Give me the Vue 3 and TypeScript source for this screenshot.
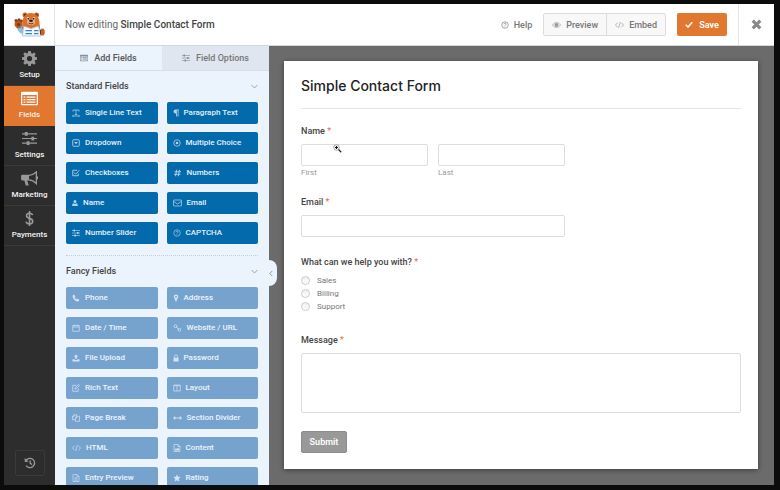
<script setup lang="ts">
import { h, ref, type FunctionalComponent } from 'vue'

type Shape = ['f' | 's', string]
interface Glyph { box: string; shapes: Shape[]; stroke?: number }

const CIRCLE = 'M8 1.5a6.5 6.5 0 1 0 0 13a6.5 6.5 0 1 0 0-13z'

const glyphs: Record<string, Glyph> = {
  gear: { box: '0 0 16 16', shapes: [['f', 'M6.7 0h2.6l.4 2.2 1.3.6L12.900 1.500l1.700 1.800-1.200 1.800.6 1.300L16 6.700v2.600l-2.100.4-.5 1.300 1.200 1.800-1.800 1.800-1.800-1.200-1.300.5L9.300 16H6.700l-.4-2.100-1.300-.5-1.800 1.200-1.800-1.800 1.200-1.800-.5-1.300L0 9.300V6.700l2.100-.4.5-1.300-1.200-1.800 1.800-1.800L5 2.700l1.300-.5zM8 5.200a2.800 2.800 0 1 0 0 5.600a2.800 2.800 0 1 0 0-5.600z']] },
  list: { box: '0 0 20 16', shapes: [['f', 'M1.500 0h17A1.500 1.500 0 0 1 20 1.500v13a1.500 1.500 0 0 1-1.500 1.500h-17A1.500 1.500 0 0 1 0 14.500v-13A1.500 1.500 0 0 1 1.500 0zM1.500 4v10.500h17V4zM3 5.500h2.200v1.600H3zM6.500 5.500H17v1.600H6.500zM3 8.500h2.200v1.600H3zM6.500 8.500H17v1.600H6.500zM3 11.500h2.200v1.600H3zM6.500 11.500H17v1.600H6.500z']] },
  sliders: { box: '0 0 16 16', shapes: [['s', 'M0 3h16M0 8h16M0 13h16'], ['f', 'M3 1h3v4H3zM10 6h3v4h-3zM5 11h3v4H5z']], stroke: 1.3 },
  horn: { box: '0 0 18 16', shapes: [['f', 'M1.500 4h7v6h-2l1.700 5.500H5L3.500 10h-2A1.500 1.500 0 0 1 0 8.500v-3A1.500 1.500 0 0 1 1.500 4zM16 0h1v5.500a1.700 1.700 0 0 1 0 3.400V14h-1z'], ['s', 'M8.500 4.700C11.500 4.500 14 3 16.300 1v12.300C14 11 11.500 9.500 8.500 9.400']], stroke: 1.4 },
  dollar: { box: '0 0 10 18', shapes: [['s', 'M5 0v18M8.700 5C8.300 3.300 6.800 2.600 5 2.600 3 2.600 1.400 3.800 1.400 5.700 1.400 9.800 8.900 7.900 8.900 12.200 8.900 14.300 7.200 15.400 5 15.400 2.900 15.400 1.300 14.500.9 12.700']], stroke: 1.9 },
  history: { box: '0 0 16 16', shapes: [['s', 'M3 4.200A6.200 6.200 0 1 1 2.800 11.500M8.300 4.700v3.700l2.500 1.600'], ['f', 'M.8 1.200l.3 5.600 5.200-.6z']], stroke: 1.8 },
  help: { box: '0 0 16 16', shapes: [['s', CIRCLE], ['s', 'M5.900 6.300C6 4.900 6.900 4.300 8 4.300c1.300 0 2.200.8 2.200 1.900C10.200 7.700 8 7.700 8 9.300M8 10.800v1.400']], stroke: 1.3 },
  eye: { box: '0 0 18 12', shapes: [['s', 'M.9 6C3 2.700 5.800 1 9 1s6 1.700 8.100 5C15 9.300 12.200 11 9 11S3 9.300.9 6z'], ['f', 'M9 2a4 4 0 1 0 0 8a4 4 0 1 0 0-8z']], stroke: 1.2 },
  code: { box: '0 0 18 14', shapes: [['s', 'M5 2.500L1 7l4 4.500M13 2.500L17 7l-4 4.500M10.800 1L7.200 13']], stroke: 1.4 },
  check: { box: '0 0 16 14', shapes: [['s', 'M1.500 7.500L6 12 14.500 2.500']], stroke: 3 },
  close: { box: '0 0 16 16', shapes: [['s', 'M2.500 2.500l11 11M13.500 2.500l-11 11']], stroke: 4.6 },
  down: { box: '0 0 12 8', shapes: [['s', 'M1 1.500l5 5 5-5']], stroke: 1.3 },
  left: { box: '0 0 8 12', shapes: [['s', 'M6.500 1l-5 5 5 5']], stroke: 1.5 },
  text: { box: '0 0 16 16', shapes: [['s', 'M2 5V2h12v3M8 2v9M5.500 11h5M1 14h14M3 12.500L1 14l2 1.500M13 12.500l2 1.500-2 1.500']], stroke: 1.5 },
  para: { box: '0 0 12 16', shapes: [['f', 'M5 1h7v1.700h-1V15H9.300V2.700H7.700V15H6V9H5a4 4 0 0 1 0-8z']] },
  dropdown: { box: '0 0 16 16', shapes: [['s', 'M3 1.500h10A1.500 1.500 0 0 1 14.500 3v10a1.500 1.500 0 0 1-1.500 1.500H3A1.500 1.500 0 0 1 1.500 13V3A1.500 1.500 0 0 1 3 1.500z'], ['f', 'M4.200 6h7.600L8 10.500z']], stroke: 1.8 },
  radio: { box: '0 0 16 16', shapes: [['s', CIRCLE], ['f', 'M8 5.300a2.700 2.700 0 1 0 0 5.400a2.700 2.700 0 1 0 0-5.400z']], stroke: 1.6 },
  checkbox: { box: '0 0 16 16', shapes: [['s', 'M12.500 9v4.500H1.500v-11h9M4 7l3.200 3.200L15 2.500']], stroke: 1.8 },
  hash: { box: '0 0 16 16', shapes: [['s', 'M6.500 1.500L4 14.500M12 1.500L9.500 14.500M2 5.500h13M1 10.500h13']], stroke: 1.9 },
  user: { box: '0 0 14 16', shapes: [['f', 'M7 1a3.500 3.500 0 1 1 0 7a3.500 3.500 0 1 1 0-7zM3.500 8.500c2 1.600 5 1.600 7 0 2.200.6 3 2.300 3 6.500H.5c0-4.200.8-5.900 3-6.500z']] },
  mail: { box: '0 0 18 14', shapes: [['s', 'M2 1h14a1 1 0 0 1 1 1v10a1 1 0 0 1-1 1H2a1 1 0 0 1-1-1V2a1 1 0 0 1 1-1zM1 3.500l8 5.500 8-5.500']], stroke: 1.5 },
  phone: { box: '0 0 16 16', shapes: [['f', 'M1.500 3L4 1l3 4-1.700 1.800c.9 1.700 2.200 3 3.900 3.900L11 9l4 3-2 2.500C8.500 17 0 8.500 1.500 3z']] },
  pin: { box: '0 0 12 16', shapes: [['f', 'M6 1a4.500 4.500 0 0 1 4.500 4.500C10.500 8.500 7.500 10 7 15H5C4.500 10 1.500 8.500 1.500 5.500A4.500 4.500 0 0 1 6 1zM6 3.700a1.800 1.800 0 1 0 0 3.600a1.800 1.800 0 1 0 0-3.600z']] },
  calendar: { box: '0 0 16 16', shapes: [['s', 'M1.500 3h13v11.500h-13zM1.500 6h13M4.500 1v3.500M11.500 1v3.500']], stroke: 1.4 },
  link: { box: '0 0 16 16', shapes: [['s', 'M1.200 4.500a2.800 2.800 0 1 0 5.600 0a2.800 2.800 0 1 0-5.600 0zM9 11.500a2.800 2.800 0 1 0 5.600 0a2.800 2.800 0 1 0-5.600 0zM5.500 6l5 4.500']], stroke: 1.7 },
  upload: { box: '0 0 16 16', shapes: [['f', 'M8 1l4.500 4.500H9.500V10h-3V5.500h-3zM1 10.500h4.500V12h5v-1.500H15V15H1z']] },
  lock: { box: '0 0 12 16', shapes: [['f', 'M1 7.500h10V15H1z'], ['s', 'M3 8V5a3 3 0 0 1 6 0v3']], stroke: 1.7 },
  edit: { box: '0 0 16 16', shapes: [['s', 'M12.500 9v5.500h-11v-12h7M6 10l.6-3L13 1l2 2-6.400 6.300z']], stroke: 1.5 },
  columns: { box: '0 0 16 16', shapes: [['s', 'M1.500 2h13v12h-13zM8 2v12M1.500 3.500h13']], stroke: 1.4 },
  copy: { box: '0 0 16 16', shapes: [['s', 'M6 11.500H1V5l3-3.500h5V4M6.500 14.500V8l3-3.500H15v10zM9.500 4.500V8h-3M4 1.500V5H1']], stroke: 1.4 },
  arrows: { box: '0 0 18 12', shapes: [['s', 'M3 6h12'], ['f', 'M0 6l4.500-4v8zM18 6l-4.500-4v8z']], stroke: 1.8 },
  picture: { box: '0 0 14 16', shapes: [['s', 'M1 1h8l4 4v10H1zM9 1v4h4'], ['f', 'M3 13v-2.500L5 8.500l1.500 1.500L9 7.500l2.500 2.500v3z']], stroke: 1.4 },
  file: { box: '0 0 14 16', shapes: [['s', 'M1 1h8l4 4v10H1zM9 1v4h4M4 7.500h6M4 10h6M4 12.500h6']], stroke: 1.3 },
  star: { box: '0 0 16 16', shapes: [['f', 'M8 .8l2.200 4.800 5.200.6-3.900 3.500 1.100 5.200L8 12.300l-4.600 2.600 1.100-5.200L.6 6.200l5.200-.6z']] },
}

const Icon: FunctionalComponent<{ name: string }> = (props) => {
  const glyph = glyphs[props.name]
  return h('svg', { viewBox: glyph.box, 'aria-hidden': 'true' }, glyph.shapes.map(([mode, d]) =>
    mode === 'f'
      ? h('path', { d, fill: 'currentColor', 'fill-rule': 'evenodd' })
      : h('path', { d, fill: 'none', stroke: 'currentColor', 'stroke-width': glyph.stroke ?? 1.5 })))
}
Icon.props = ['name']

const sections = [
  { label: 'Setup', icon: 'gear' },
  { label: 'Fields', icon: 'list' },
  { label: 'Settings', icon: 'sliders' },
  { label: 'Marketing', icon: 'horn' },
  { label: 'Payments', icon: 'dollar' },
]
const activeSection = ref('Fields')

type Field = [label: string, icon: string, size: 'slim' | 'mid' | 'wide']
const groups: { title: string; muted: boolean; fields: Field[] }[] = [
  {
    title: 'Standard Fields', muted: false, fields: [
      ['Single Line Text', 'text', 'mid'], ['Paragraph Text', 'para', 'slim'],
      ['Dropdown', 'dropdown', 'mid'], ['Multiple Choice', 'radio', 'mid'],
      ['Checkboxes', 'checkbox', 'mid'], ['Numbers', 'hash', 'wide'],
      ['Name', 'user', 'slim'], ['Email', 'mail', 'wide'],
      ['Number Slider', 'sliders', 'mid'], ['CAPTCHA', 'help', 'mid'],
    ],
  },
  {
    title: 'Fancy Fields', muted: true, fields: [
      ['Phone', 'phone', 'mid'], ['Address', 'pin', 'slim'],
      ['Date / Time', 'calendar', 'mid'], ['Website / URL', 'link', 'wide'],
      ['File Upload', 'upload', 'mid'], ['Password', 'lock', 'slim'],
      ['Rich Text', 'edit', 'mid'], ['Layout', 'columns', 'mid'],
      ['Page Break', 'copy', 'mid'], ['Section Divider', 'arrows', 'wide'],
      ['HTML', 'code', 'wide'], ['Content', 'picture', 'mid'],
      ['Entry Preview', 'file', 'mid'], ['Rating', 'star', 'mid'],
    ],
  },
]

const choices = ['Sales', 'Billing', 'Support']
const choice = ref('')
</script>

<template>
  <div class="frame">
    <div class="builder">
      <header class="topbar">
        <div class="brand">
          <svg class="bear" viewBox="0 0 62 50" aria-hidden="true">
            <path d="M12 29l10 3-3 14-9-6-5-9z" fill="#8dbbe6" />
            <path d="M47 31l9 3 4 8-5 6-9-4z" fill="#a9cdf0" />
            <ellipse cx="9" cy="24" rx="8" ry="8.500" fill="#b85d22" />
            <circle cx="4" cy="17" r="3" fill="#8a3f1b" /><circle cx="10" cy="15.500" r="3" fill="#8a3f1b" /><circle cx="15" cy="18" r="3" fill="#8a3f1b" />
            <ellipse cx="9" cy="25" rx="3.500" ry="3" fill="#7b3517" />
            <circle cx="22" cy="6" r="5" fill="#c9601f" /><circle cx="45" cy="6" r="5" fill="#c9601f" />
            <circle cx="22" cy="6" r="2.500" fill="#7b3517" /><circle cx="45" cy="6" r="2.500" fill="#7b3517" />
            <path d="M17 34C15 12 21 2 33.500 2S53 12 51 34z" fill="#dd7028" />
            <path d="M17 26l4 6h26l4-6v8H17z" fill="#a84d1c" />
            <ellipse cx="34" cy="20" rx="8" ry="6" fill="#f0b988" />
            <ellipse cx="28" cy="13" rx="2.500" ry="3" fill="#fff" /><ellipse cx="40" cy="13" rx="2.500" ry="3" fill="#fff" />
            <circle cx="28.500" cy="13.500" r="1.800" fill="#2b2320" /><circle cx="39.500" cy="13.500" r="1.800" fill="#2b2320" />
            <ellipse cx="34" cy="17.500" rx="4" ry="2.700" fill="#2b2320" />
            <path d="M29 22q5 4 10 0" fill="none" stroke="#6b3318" stroke-width="2" />
            <path d="M19 28l15 5 15-5 5 20H17z" fill="#f5f9fe" stroke="#8dbbe6" stroke-width="1.500" />
            <path d="M23 37h13M40 37h9M23 43h13M40 43h9" stroke="#3d83c6" stroke-width="2.500" />
            <ellipse cx="57" cy="40" rx="4.500" ry="7" fill="#c9601f" />
            <path d="M53 36v9" stroke="#6b3318" stroke-width="2" />
          </svg>
        </div>
        <p class="editing">Now editing <strong>Simple Contact Form</strong></p>
        <a class="help" href="#help"><Icon name="help" />Help</a>
        <div class="pair">
          <button type="button"><Icon name="eye" />Preview</button>
          <button type="button"><Icon name="code" />Embed</button>
        </div>
        <button type="button" class="save"><Icon name="check" />Save</button>
        <button type="button" class="exit" aria-label="Close"><Icon name="close" /></button>
      </header>

      <div class="body">
        <nav class="rail">
          <button
            v-for="s in sections" :key="s.label" type="button"
            :class="{ active: s.label === activeSection }" @click="activeSection = s.label"
          >
            <Icon :name="s.icon" />{{ s.label }}
          </button>
          <button type="button" class="history" aria-label="Revisions"><Icon name="history" /></button>
        </nav>

        <aside class="panel">
          <div class="tabs">
            <button type="button" class="current"><Icon name="list" />Add Fields</button>
            <button type="button"><Icon name="sliders" />Field Options</button>
          </div>
          <div class="groups">
            <section v-for="g in groups" :key="g.title" class="group">
              <h2>{{ g.title }}<Icon name="down" /></h2>
              <div class="grid">
                <button
                  v-for="[label, icon, size] in g.fields" :key="label" type="button"
                  class="field" :class="[size, { muted: g.muted }]"
                >
                  <Icon :name="icon" />{{ label }}
                </button>
              </div>
            </section>
          </div>
          <button type="button" class="collapse" aria-label="Collapse panel"><Icon name="left" /></button>
        </aside>

        <main class="stage">
          <form class="sheet" @submit.prevent>
            <h1>Simple Contact Form</h1>
            <fieldset class="names">
              <legend>Name <i>*</i></legend>
              <div class="row">
                <div class="cell"><input id="first" type="text"><label for="first">First</label></div>
                <div class="cell"><input id="last" type="text"><label for="last">Last</label></div>
              </div>
            </fieldset>
            <div class="email">
              <label class="title" for="email">Email <i>*</i></label>
              <input id="email" type="email">
            </div>
            <fieldset class="topics">
              <legend>What can we help you with? <i>*</i></legend>
              <label v-for="c in choices" :key="c" class="choice">
                <input v-model="choice" type="radio" name="topic" :value="c">{{ c }}
              </label>
            </fieldset>
            <div class="message">
              <label class="title" for="message">Message <i>*</i></label>
              <textarea id="message"></textarea>
            </div>
            <button type="submit" class="submit">Submit</button>
            <svg class="pointer" viewBox="0 0 18 18" aria-hidden="true">
              <circle cx="7" cy="7" r="5.500" fill="#fff" stroke="#777" stroke-width="1.300" />
              <path d="M7 4v6M4 7h6" stroke="#111" stroke-width="2.200" />
              <path d="M11 11l5.500 5.500" stroke="#222" stroke-width="2.400" />
            </svg>
          </form>
        </main>
      </div>
    </div>
  </div>
</template>

<style>
body { background: #0c0c0c; }
</style>

<style scoped>
.frame, .frame * { box-sizing: border-box; }
.frame {
  height: 100vh;
  padding: 4px 6px 5px 4px;
  font-family: Roboto, "Liberation Sans", sans-serif;
  font-size: 9px;
  line-height: 12px;
  color: #444;
}
button, input, textarea { font: inherit; margin: 0; }
button { border: 0; padding: 0; background: none; color: inherit; cursor: pointer; white-space: nowrap; }
svg { display: block; flex: none; }
h1, h2, p, fieldset { margin: 0; padding: 0; border: 0; min-width: 0; }
legend { padding: 0; }

.builder { height: 100%; display: flex; flex-direction: column; background: #fff; overflow: hidden; }

.topbar { flex: none; display: flex; align-items: center; height: 42px; border-bottom: 1px solid #d3d8de; }
.brand { width: 51px; align-self: stretch; display: flex; align-items: center; justify-content: center; border-right: 1px solid #e3e5e7; }
.bear { width: 31px; height: 25px; }
.editing { flex: 1; padding-left: 10px; font-size: 10px; color: #666; }
.editing strong { font-weight: 500; color: #444; }
.help { display: flex; align-items: center; gap: 5px; margin-right: 11px; color: #777; text-decoration: none; font-weight: 500; }
.help svg { width: 8px; height: 8px; }
.pair { display: flex; border: 1px solid #dcdcdc; border-radius: 2px; background: #f8f8f8; height: 23px; }
.pair button { display: flex; align-items: center; gap: 5px; padding: 0 8px; font-weight: 500; color: #777; }
.pair button + button { border-left: 1px solid #dcdcdc; }
.pair svg { width: 9px; height: 8px; color: #999; }
.save { display: flex; align-items: center; justify-content: center; gap: 6px; width: 50px; height: 23px; margin: 0 11px; border-radius: 2px; background: #e27730; color: #fff; font-weight: 600; }
.save svg { width: 8px; height: 7px; }
.exit { width: 36px; align-self: stretch; display: flex; align-items: center; justify-content: center; border-left: 1px solid #e3e5e7; color: #888; }
.exit svg { width: 11px; height: 11px; }

.body { flex: 1; min-height: 0; display: flex; }

.rail { flex: none; width: 51px; display: flex; flex-direction: column; background: #2d2d2d; }
.rail button { height: 40px; display: flex; flex-direction: column; align-items: center; justify-content: center; gap: 3px; border-bottom: 1px solid #3a3a3a; color: #f2f2f2; font-size: 8px; font-weight: 500; }
.rail svg { width: 17px; height: 15px; color: #999; }
.rail .active { background: #e27730; border-color: #e27730; }
.rail .active svg { color: #fff; }
.rail .history { width: 30px; height: 26px; margin: auto auto 9px; border: 1px solid #3a3a3a; border-radius: 2px; }
.rail .history svg { width: 12px; height: 12px; }

.panel { position: relative; z-index: 1; flex: none; width: 214px; display: flex; flex-direction: column; background: #ebf3fc; }
.tabs { flex: none; display: flex; height: 25px; border-bottom: 1px solid #d5dde7; }
.tabs button { flex: 1; display: flex; align-items: center; justify-content: center; gap: 6px; background: #dfe6f0; color: #777; font-weight: 500; }
.tabs .current { background: #ebf3fc; color: #555; }
.tabs svg { width: 8px; height: 8px; color: #86909a; }
.groups { flex: 1; min-height: 0; overflow: hidden; padding: 0 11px; }
.group { padding: 9px 0 11px; }
.group + .group { border-top: 1px dotted #c6cdd6; }
.group h2 { display: flex; align-items: center; justify-content: space-between; margin-bottom: 10px; font-size: 9px; font-weight: 500; color: #444; }
.group h2 svg { width: 7px; height: 5px; color: #888; }
.grid { display: grid; grid-template-columns: 1fr 1fr; gap: 8px 9px; }
.field { display: flex; align-items: center; gap: 5px; height: 22px; padding: 0 6px; border-radius: 2px; background: #036aab; color: #e6f0f7; font-size: 8px; font-weight: 500; }
.field svg { height: 8px; color: #b5d2e7; }
.field.slim svg { width: 6px; }
.field.mid svg { width: 8px; }
.field.wide svg { width: 9px; }
.field.muted { background: #76a3ce; color: #edf4fb; }
.field.muted svg { color: #d2e2f1; }
.collapse { position: absolute; right: -8px; top: 214px; width: 12px; height: 26px; border-radius: 0 8px 8px 0; background: #ebf3fc; color: #777; display: flex; align-items: center; justify-content: center; }
.collapse svg { width: 4px; height: 7px; }

.stage { flex: 1; min-width: 0; padding: 15px 16px 16px 15px; background: #6b6b6b; }
.sheet { position: relative; height: 100%; padding: 16px 17px; background: #fff; box-shadow: 0 1px 5px rgba(0, 0, 0, 0.45); color: #444; }
h1 { padding-bottom: 14px; border-bottom: 1px solid #e2e2e2; font-family: Inter, "Liberation Sans", sans-serif; font-size: 14px; line-height: 17px; font-weight: 500; color: #222; }
.names { margin-top: 16px; }
.title, legend { display: block; margin-bottom: 7px; font-size: 9px; font-weight: 500; line-height: 12px; color: #444; }
i { font-style: normal; font-weight: 400; color: #e0704a; }
.row { display: flex; gap: 10px; width: 60%; }
.cell { flex: 1; min-width: 0; }
.cell label { display: block; margin-top: 1px; font-size: 8px; color: #999; }
input[type="text"], input[type="email"], textarea { display: block; width: 100%; height: 22px; padding: 0 4px; border: 1px solid #ddd; border-radius: 2px; background: #fff; outline: 0; }
.email { padding-top: 17px; }
.email input { width: 60%; }
.topics { margin-top: 19px; }
.topics legend { margin-bottom: 6px; }
.choice { display: flex; align-items: center; gap: 7px; height: 13px; font-size: 8px; color: #777; }
.choice input { appearance: none; width: 9px; height: 9px; border: 1px solid #ccc; border-radius: 50%; background: linear-gradient(#eee, #fff); }
.message { padding-top: 21px; }
textarea { height: 60px; resize: none; }
.submit { display: block; margin-top: 18px; width: 46px; height: 22px; border: 1px solid #8c8c8c; border-radius: 2px; background: #999; color: #fff; font-weight: 600; }
.pointer { position: absolute; left: 49px; top: 83px; width: 9px; height: 9px; }
</style>
